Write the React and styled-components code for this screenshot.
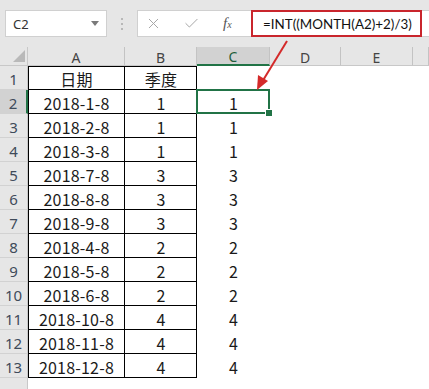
import styled, { createGlobalStyle } from "styled-components";
import { X, Check } from "lucide-react";

const GlobalStyle = createGlobalStyle`
  html, body {
    margin: 0;
    padding: 0;
    background: #fff;
    overflow: hidden;
  }
  * {
    box-sizing: border-box;
  }
`;

const green = "#217346";
const cellFont = `"Noto Sans CJK SC", "Noto Sans", sans-serif`;

const Page = styled.div`
  position: relative;
  width: 429px;
  height: 389px;
  overflow: hidden;
  font-family: ${cellFont};
`;

const Toolbar = styled.div`
  height: 47px;
  background: #e6e6e6;
  display: flex;
  align-items: flex-start;
  padding-top: 10px;
  padding-left: 5px;
`;

const NameBox = styled.div`
  width: 102px;
  height: 27px;
  background: #fff;
  border: 1px solid #d0d0d0;
  display: flex;
  align-items: center;
  justify-content: space-between;
  padding: 0 7px 0 7px;
  font-family: "Noto Sans", sans-serif;
  font-size: 13px;
  color: #333;
`;

const DropArrow = styled.span`
  width: 0;
  height: 0;
  border-left: 4px solid transparent;
  border-right: 4px solid transparent;
  border-top: 5px solid #7a7a7a;
`;

const Dots = styled.div`
  width: 30px;
  height: 27px;
  display: flex;
  flex-direction: column;
  align-items: center;
  justify-content: center;
  gap: 3px;
  span {
    width: 2px;
    height: 2px;
    border-radius: 50%;
    background: #a8a8a8;
  }
`;

const FormulaBar = styled.div`
  flex: 1;
  height: 27px;
  background: #fff;
  border: 1px solid #d0d0d0;
  border-right: none;
  display: flex;
  align-items: center;
  padding-left: 7px;
  color: #a6a6a6;
`;

const IconSlot = styled.div`
  width: 38px;
  display: flex;
  align-items: center;
  justify-content: flex-start;
`;

const Fx = styled.div`
  width: 30px;
  font-family: "Liberation Serif", serif;
  font-style: italic;
  font-size: 15px;
  color: #555;
  padding-left: 2px;
  sub {
    font-size: 10px;
    vertical-align: baseline;
  }
`;

const FormulaBox = styled.div`
  width: 171px;
  height: 27px;
  border: 2px solid #c9252c;
  display: flex;
  align-items: center;
  padding-left: 10px;
  font-family: Lato, "Noto Sans", sans-serif;
  font-size: 13.4px;
  color: #111;
  white-space: nowrap;
`;

const Sheet = styled.div`
  display: grid;
  grid-template-columns: 28px 97px 72px 73px 71px 72px 1fr;
  grid-template-rows: 19px repeat(14, 24px);
`;

const Corner = styled.div`
  background: #e6e6e6;
  border-right: 1px solid #c8c8c8;
  border-bottom: 1px solid #c8c8c8;
  position: relative;
  &::after {
    content: "";
    position: absolute;
    right: 2px;
    bottom: 3px;
    width: 0;
    height: 0;
    border-left: 12px solid transparent;
    border-bottom: 12px solid #b9b9b9;
  }
`;

const ColHead = styled.div`
  background: ${(p) => (p.$selected ? "#d2d2d2" : "#e6e6e6")};
  border-right: 1px solid #c3c3c3;
  border-bottom: ${(p) => (p.$selected ? `2px solid ${green}` : "1px solid #c8c8c8")};
  display: flex;
  align-items: center;
  justify-content: center;
  font-family: "Noto Sans", sans-serif;
  font-size: 14px;
  color: ${(p) => (p.$selected ? "#1e5e3a" : "#444")};
  padding-top: 2px;
`;

const RowHead = styled.div`
  background: ${(p) => (p.$selected ? "#d2d2d2" : "#e6e6e6")};
  border-bottom: 1px solid #d2d2d2;
  border-right: ${(p) => (p.$selected ? `2px solid ${green}` : "1px solid #c8c8c8")};
  display: flex;
  align-items: center;
  justify-content: center;
  font-family: "Noto Sans", sans-serif;
  font-size: 15px;
  color: #3f4b5a;
  padding-top: 3px;
`;

const edge = (p) => {
  const s = [];
  if (p.$boxed) s.push("inset -1px -1px 0 #000");
  if (p.$top) s.push("inset 0 1px 0 #000");
  if (p.$left) s.push("inset 1px 0 0 #000");
  return s.length ? s.join(", ") : "none";
};

const Cell = styled.div`
  position: relative;
  display: flex;
  align-items: center;
  justify-content: center;
  font-size: 16px;
  color: #1a1a1a;
  letter-spacing: 0.2px;
  box-shadow: ${edge};
  padding-top: 1px;
  ${(p) =>
    p.$active &&
    `
    &::before {
      content: "";
      position: absolute;
      left: -1px;
      top: -1px;
      right: 0;
      bottom: 0;
      border: 2px solid ${green};
    }
    &::after {
      content: "";
      position: absolute;
      right: -3px;
      bottom: -3px;
      width: 6px;
      height: 6px;
      background: ${green};
      border: 1px solid #fff;
    }
  `}
`;

const Arrow = styled.svg`
  position: absolute;
  left: 0;
  top: 0;
  pointer-events: none;
`;

const dates = [
  ["2018-1-8", 1],
  ["2018-2-8", 1],
  ["2018-3-8", 1],
  ["2018-7-8", 3],
  ["2018-8-8", 3],
  ["2018-9-8", 3],
  ["2018-4-8", 2],
  ["2018-5-8", 2],
  ["2018-6-8", 2],
  ["2018-10-8", 4],
  ["2018-11-8", 4],
  ["2018-12-8", 4],
];

const cols = ["A", "B", "C", "D", "E", ""];

export default function App() {
  const rows = [["日期", "季度", ""], ...dates.map(([d, q]) => [d, String(q), String(q)])];

  return (
    <Page>
      <GlobalStyle />
      <Toolbar>
        <NameBox>
          C2
          <DropArrow />
        </NameBox>
        <Dots>
          <span />
          <span />
          <span />
        </Dots>
        <FormulaBar>
          <IconSlot>
            <X size={17} strokeWidth={1.4} />
          </IconSlot>
          <IconSlot>
            <Check size={17} strokeWidth={1.4} />
          </IconSlot>
          <Fx>
            f<sub>x</sub>
          </Fx>
          <FormulaBox>=INT((MONTH(A2)+2)/3)</FormulaBox>
        </FormulaBar>
      </Toolbar>

      <Sheet>
        <Corner />
        {cols.map((c, i) => (
          <ColHead key={i} $selected={c === "C"}>
            {c}
          </ColHead>
        ))}
        {Array.from({ length: 14 }).map((_, r) => {
          const data = rows[r];
          return [
            <RowHead key={`h${r}`} $selected={r === 1}>
              {data ? r + 1 : ""}
            </RowHead>,
            <Cell key={`a${r}`} $boxed={!!data} $top={r === 0} $left={!!data}>
              {data ? data[0] : ""}
            </Cell>,
            <Cell key={`b${r}`} $boxed={!!data} $top={r === 0}>
              {data ? data[1] : ""}
            </Cell>,
            <Cell key={`c${r}`} $active={r === 1}>
              {data ? data[2] : ""}
            </Cell>,
            <Cell key={`d${r}`} />,
            <Cell key={`e${r}`} />,
            <Cell key={`f${r}`} />,
          ];
        })}
      </Sheet>

      <Arrow width="429" height="389" viewBox="0 0 429 389">
        <line x1="287" y1="41" x2="262" y2="82" stroke="#d42a2a" strokeWidth="2" />
        <polygon points="257,90 258,75 268,81" fill="#d42a2a" />
      </Arrow>
    </Page>
  );
}
